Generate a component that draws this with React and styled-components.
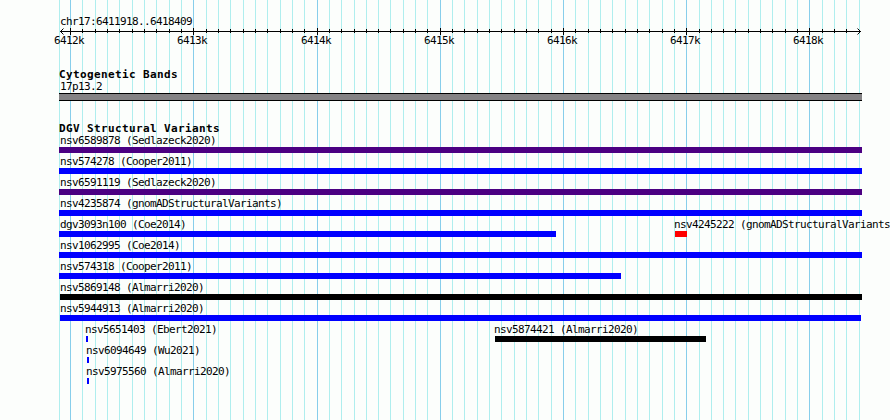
import React from "react";
import styled, { createGlobalStyle } from "styled-components";

const GlobalStyle = createGlobalStyle`
  body {
    margin: 0;
    background: #fcfefc;
  }
`;

const Page = styled.div`
  position: relative;
  width: 890px;
  height: 420px;
  overflow: hidden;
  background: #fcfefc;
  color: #000;
  font-family: "DejaVu Sans Mono", "Liberation Mono", monospace;
`;

const GridLines = styled.svg`
  position: absolute;
  top: 0;
  left: 0;
`;

const Tracks = styled.div`
  position: relative;
  display: flex;
  flex-direction: column;
`;

const RulerHeader = styled.div`
  height: 28px;
  box-sizing: border-box;
  padding: 13px 0 0 60px;
`;

const Ruler = styled.svg`
  display: block;
  height: 39px;

  text {
    font-size: 11px;
    letter-spacing: -0.62px;
  }
`;

const Label = styled.div`
  height: 15px;
  line-height: 17px;
  font-size: 11px;
  letter-spacing: -0.62px;
  white-space: nowrap;
`;

const Track = styled.section`
  padding-left: 59px;
  margin-bottom: ${(props) => props.$gap || 0}px;
`;

const TrackTitle = styled.h2`
  height: 11px;
  line-height: 15px;
  margin: 0;
  font-size: 11px;
  font-weight: bold;
  letter-spacing: 0.38px;
  white-space: nowrap;
`;

const Band = styled.div`
  width: 803px;
  height: 8px;
  box-sizing: border-box;
  border: solid #000;
  border-width: 1px 0;
  background: #848284;
`;

const Row = styled.div`
  display: flex;
  height: 21px;
`;

const Feature = styled.div`
  flex: none;
  width: ${(props) => props.$width}px;
  margin-left: ${(props) => props.$before}px;
`;

const FeatureLabel = styled(Label)`
  margin-left: ${(props) => props.$shift}px;
`;

const Bar = styled.div`
  height: 6px;
  background: ${(props) => props.$color};
`;

const BLUE = "#0000ff";
const INDIGO = "#4b0082";
const BLACK = "#000000";
const RED = "#ff0000";

// before = space between this feature and the one to its left
const rows = [
  [{ name: "nsv6589878 (Sedlazeck2020)", before: 0, width: 803, color: INDIGO, shift: 1 }],
  [{ name: "nsv574278 (Cooper2011)", before: 0, width: 803, color: BLUE, shift: 1 }],
  [{ name: "nsv6591119 (Sedlazeck2020)", before: 0, width: 803, color: INDIGO, shift: 1 }],
  [{ name: "nsv4235874 (gnomADStructuralVariants)", before: 0, width: 803, color: BLUE, shift: 1 }],
  [
    { name: "dgv3093n100 (Coe2014)", before: 0, width: 497, color: BLUE, shift: 1 },
    { name: "nsv4245222 (gnomADStructuralVariants)", before: 119, width: 12, color: RED, shift: -1 },
  ],
  [{ name: "nsv1062995 (Coe2014)", before: 0, width: 803, color: BLUE, shift: 1 }],
  [{ name: "nsv574318 (Cooper2011)", before: 0, width: 562, color: BLUE, shift: 1 }],
  [{ name: "nsv5869148 (Almarri2020)", before: 1, width: 802, color: BLACK, shift: 0 }],
  [{ name: "nsv5944913 (Almarri2020)", before: 1, width: 801, color: BLUE, shift: 0 }],
  [
    { name: "nsv5651403 (Ebert2021)", before: 27, width: 2, color: BLUE, shift: -1 },
    { name: "nsv5874421 (Almarri2020)", before: 407, width: 211, color: BLACK, shift: -1 },
  ],
  [{ name: "nsv6094649 (Wu2021)", before: 28, width: 2, color: BLUE, shift: -1 }],
  [{ name: "nsv5975560 (Almarri2020)", before: 28, width: 2, color: BLUE, shift: -1 }],
];

// one tick every 100 bp, 6412k is tick 0
const ticks = Array.from({ length: 65 }, (_, i) => ({
  x: Math.floor(70.65 + i * 12.321),
  major: i % 10 === 0,
  label: `${6412 + i / 10}k`,
}));

const App = () => {
  return (
    <>
      <GlobalStyle />
      <Page>
        <GridLines width="890" height="420" shapeRendering="crispEdges">
          <rect x="59" y="0" width="1" height="420" fill="#afeeee" />
          {ticks.map((t) => (
            <rect
              key={t.x}
              x={t.x}
              y="0"
              width="1"
              height="420"
              fill={t.major ? "#87ceeb" : "#afeeee"}
            />
          ))}
        </GridLines>
        <Tracks>
          <RulerHeader>
            <Label>chr17:6411918..6418409</Label>
          </RulerHeader>
          <Ruler width="890" height="39" viewBox="0 28 890 39">
            <g shapeRendering="crispEdges">
              <rect x="60" y="31" width="801" height="1" />
              {ticks.slice(0, 64).map((t) => (
                <rect
                  key={t.x}
                  x={t.x}
                  y={t.major ? 28 : 29}
                  width="1"
                  height={t.major ? 7 : 4}
                />
              ))}
            </g>
            <path d="M63.5 28.5l-3 3l3 3M857.5 28.5l3 3l-3 3" fill="none" stroke="#000" />
            {ticks
              .filter((t) => t.major)
              .map((t) => (
                <text key={t.x} x={t.x - 16} y="44">
                  {t.label}
                </text>
              ))}
          </Ruler>
          <Track $gap={20}>
            <TrackTitle>Cytogenetic Bands</TrackTitle>
            <FeatureLabel $shift={1}>17p13.2</FeatureLabel>
            <Band />
          </Track>
          <Track>
            <TrackTitle>DGV Structural Variants</TrackTitle>
            {rows.map((row) => (
              <Row key={row[0].name}>
                {row.map((f) => (
                  <Feature key={f.name} $width={f.width} $before={f.before}>
                    <FeatureLabel $shift={f.shift}>{f.name}</FeatureLabel>
                    <Bar $color={f.color} />
                  </Feature>
                ))}
              </Row>
            ))}
          </Track>
        </Tracks>
      </Page>
    </>
  );
};

export default App;
